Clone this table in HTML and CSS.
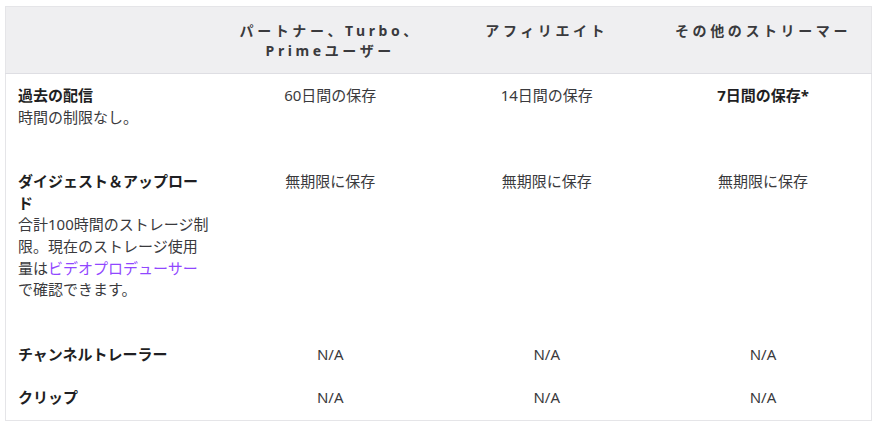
FILE: index.html
```html
<!DOCTYPE html>
<html lang="ja">
<head>
<meta charset="utf-8">
<link rel="stylesheet" href="styles.css">
</head>
<body>
<table class="cmp">
  <thead>
    <tr>
      <th></th>
      <th>パートナー、Turbo、Primeユーザー</th>
      <th>アフィリエイト</th>
      <th>その他のストリーマー</th>
    </tr>
  </thead>
  <tbody>
    <tr>
      <td class="label"><strong>過去の配信</strong><p>時間の制限なし。</p></td>
      <td>60日間の保存</td>
      <td>14日間の保存</td>
      <td><strong>7日間の保存*</strong></td>
    </tr>
    <tr>
      <td class="label"><strong>ダイジェスト＆アップロード</strong><p>合計100時間のストレージ制限。現在のストレージ使用量は<a href="#">ビデオプロデューサー</a>で確認できます。</p></td>
      <td>無期限に保存</td>
      <td>無期限に保存</td>
      <td>無期限に保存</td>
    </tr>
    <tr>
      <td class="label"><strong>チャンネルトレーラー</strong></td>
      <td>N/A</td>
      <td>N/A</td>
      <td>N/A</td>
    </tr>
    <tr>
      <td class="label"><strong>クリップ</strong></td>
      <td>N/A</td>
      <td>N/A</td>
      <td>N/A</td>
    </tr>
  </tbody>
</table>
</body>
</html>
```
FILE: styles.css
```css
html, body {
  margin: 0;
  background: #ffffff;
}
body {
  padding: 6px 2px 0 5px;
  font-family: "Noto Sans", "Noto Sans CJK JP", sans-serif;
  font-size: 15px;
  line-height: 21.6px;
  color: #3a3a3d;
}
.cmp {
  width: 100%;
  table-layout: fixed;
  border-collapse: collapse;
  border: 1px solid #e5e5e8;
}
.cmp th {
  background: #efeff1;
  border-bottom: 1px solid #dedee3;
  font-size: 14px;
  line-height: 20px;
  font-weight: 700;
  letter-spacing: 3.6px;
  color: #3a3a3d;
  text-align: center;
  vertical-align: top;
  padding: 14px 12px 12px;
}
.cmp td {
  vertical-align: top;
  text-align: center;
  padding: 11px 12px;
}
.cmp td.label {
  text-align: left;
}
.cmp strong {
  font-weight: 700;
  color: #1f1f23;
}
.cmp td.label strong {
  display: block;
}
.cmp p {
  margin: 0 0 21px;
}
.cmp a {
  color: #9147ff;
  text-decoration: none;
}
```
